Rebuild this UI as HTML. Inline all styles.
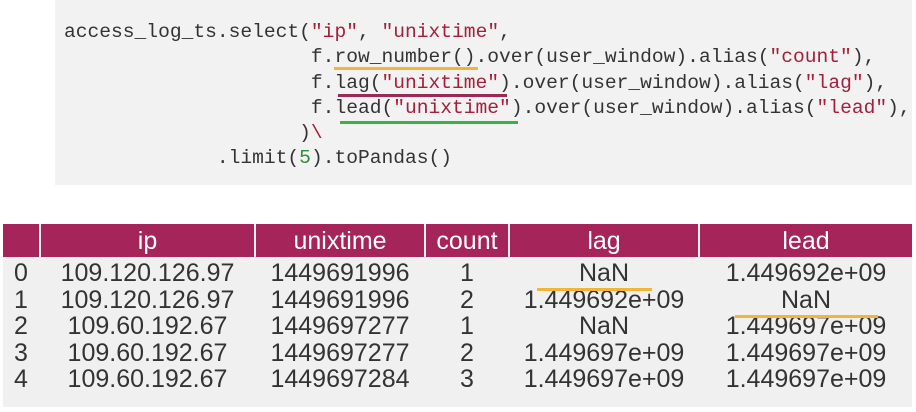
<!DOCTYPE html>
<html><head><meta charset="utf-8"><style>
body{margin:0;width:916px;height:412px;background:#fff;position:relative;overflow:hidden;font-family:"Liberation Sans",sans-serif}
#code{position:absolute;left:55px;top:0;width:857px;height:185px;background:#f2f2f2}
pre{position:absolute;left:64px;top:20px;margin:0;font-family:"Liberation Mono",monospace;font-size:19.6px;line-height:25.3px;color:#333}
.s{color:#a3203a}.n{color:#2e8b3a}
.ul{position:absolute;height:3px}
#tbl{position:absolute;left:3px;top:224px;width:909px;height:183px;background:#f0f0f0}
.h{position:absolute;top:224px;height:33px;background:#a5245a;color:#fff;font-size:25px;line-height:35px;text-align:center}
.c{position:absolute;font-size:25px;color:#333;text-align:center;line-height:26.5px;white-space:nowrap}
</style></head><body>
<div id="code"></div>
<pre>access_log_ts.select(<span class="s">"ip"</span>, <span class="s">"unixtime"</span>,
                     f.row_number().over(user_window).alias(<span class="s">"count"</span>),
                     f.lag(<span class="s">"unixtime"</span>).over(user_window).alias(<span class="s">"lag"</span>),
                     f.lead(<span class="s">"unixtime"</span>).over(user_window).alias(<span class="s">"lead"</span>),
                    )<span class="s">\</span>
             .limit(<span class="n">5</span>).toPandas()</pre>
<div class="ul" style="left:334px;top:67px;width:144px;background:#f2b43a"></div>
<div class="ul" style="left:338px;top:94px;width:169px;background:#9a2a55"></div>
<div class="ul" style="left:340px;top:121px;width:178px;background:#3cb043"></div>
<div id="tbl"></div>
<div class="h" style="left:3px;width:36px"></div>
<div class="h" style="left:41px;width:213px">ip</div>
<div class="h" style="left:256px;width:168px">unixtime</div>
<div class="h" style="left:426px;width:82px">count</div>
<div class="h" style="left:510px;width:188px">lag</div>
<div class="h" style="left:700px;width:212px">lead</div>
<div class="c" style="left:3px;top:260px;width:36px">0<br>1<br>2<br>3<br>4</div>
<div class="c" style="left:41px;top:260px;width:213px">109.120.126.97<br>109.120.126.97<br>109.60.192.67<br>109.60.192.67<br>109.60.192.67</div>
<div class="c" style="left:256px;top:260px;width:168px">1449691996<br>1449691996<br>1449697277<br>1449697277<br>1449697284</div>
<div class="c" style="left:426px;top:260px;width:82px">1<br>2<br>1<br>2<br>3</div>
<div class="c" style="left:510px;top:260px;width:188px">NaN<br>1.449692e+09<br>NaN<br>1.449697e+09<br>1.449697e+09</div>
<div class="c" style="left:700px;top:260px;width:212px">1.449692e+09<br>NaN<br>1.449697e+09<br>1.449697e+09<br>1.449697e+09</div>
<div class="ul" style="left:537px;top:288px;width:115px;background:#f2b43a"></div>
<div class="ul" style="left:735px;top:315px;width:143px;background:#f2b43a"></div>
</body></html>
